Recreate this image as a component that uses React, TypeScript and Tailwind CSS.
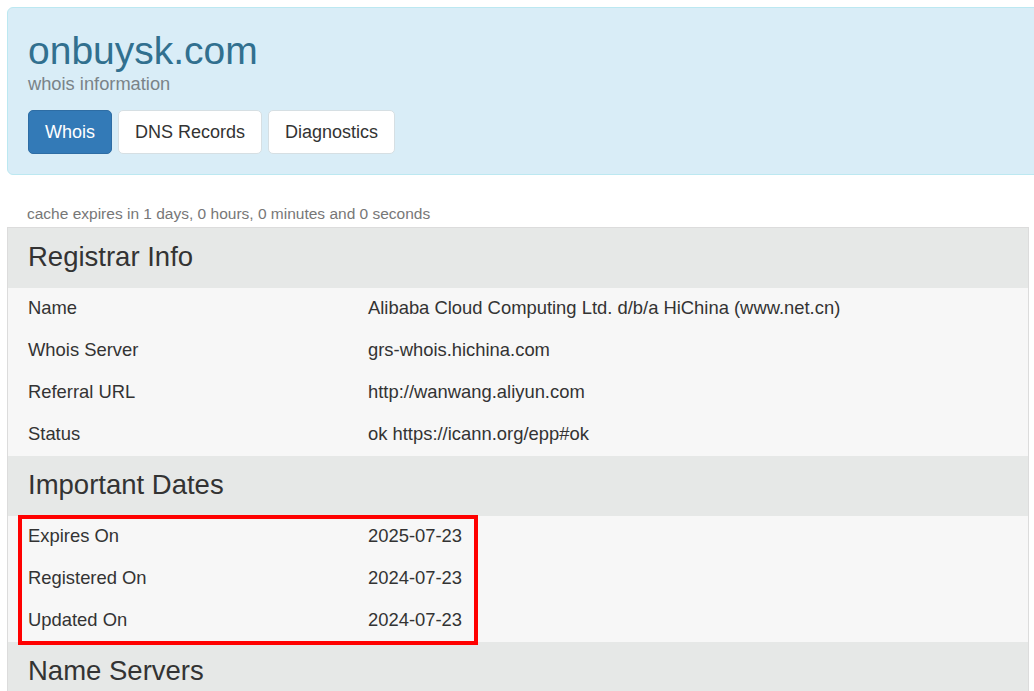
import React from 'react';

const registrar = [
	['Name', 'Alibaba Cloud Computing Ltd. d/b/a HiChina (www.net.cn)'],
	['Whois Server', 'grs-whois.hichina.com'],
	['Referral URL', 'http://wanwang.aliyun.com'],
	['Status', 'ok https://icann.org/epp#ok'],
];

const dates = [
	['Expires On', '2025-07-23'],
	['Registered On', '2024-07-23'],
	['Updated On', '2024-07-23'],
];

function SectionHead({ title }: { title: string }) {
	return (
		<div className="h-[60px] bg-[#e6e8e7] px-5 flex items-center text-[27.5px] leading-none text-[#333] pb-[3px]">
			{title}
		</div>
	);
}

function Rows({ rows }: { rows: string[][] }) {
	return (
		<div className="bg-[#f7f7f7]">
			{rows.map(([k, v]) => (
				<div key={k} className="grid grid-cols-[340px_1fr] h-[42px] items-center text-[18.4px] text-[#333] pb-[2px]">
					<div className="pl-5">{k}</div>
					<div className="pl-5">{v}</div>
				</div>
			))}
		</div>
	);
}

export default function App() {
	return (
		<div
			className="w-[1034px] h-[691px] overflow-hidden bg-white"
			style={{ fontFamily: '"Liberation Sans", Arial, sans-serif' }}
		>
			{/* header */}
			<div className="ml-[7px] mt-[7px] w-[1060px] h-[168px] rounded-md border border-[#bce8f1] bg-[#d9edf7] pl-5 pt-[23px]">
				<h1 className="text-[39px] leading-[40px] text-[#31708f]">onbuysk.com</h1>
				<div className="mt-[2px] text-[18.3px] leading-[21px] text-[#7a8388]">whois information</div>
				<div className="mt-[16px] flex gap-[6px]">
					<button className="h-[44px] px-4 rounded-[5px] border border-[#2e6da4] bg-[#337ab7] text-[18px] text-white">
						Whois
					</button>
					<button className="h-[44px] px-4 rounded-[5px] border border-[#d6dfe3] bg-white text-[18px] text-[#333]">
						DNS Records
					</button>
					<button className="h-[44px] px-4 rounded-[5px] border border-[#d6dfe3] bg-white text-[18px] text-[#333]">
						Diagnostics
					</button>
				</div>
			</div>

			<div className="mt-[30px] pl-[27px] text-[15.5px] leading-[18px] text-[#777]">
				cache expires in 1 days, 0 hours, 0 minutes and 0 seconds
			</div>

			{/* whois table */}
			<div className="ml-[7px] mt-[4px] w-[1022px] border border-[#dcdcdc]">
				<SectionHead title="Registrar Info" />
				<Rows rows={registrar} />
				<SectionHead title="Important Dates" />
				<div className="relative">
					<Rows rows={dates} />
					<div className="absolute left-[10px] top-[-1px] w-[460px] h-[130px] border-[4px] border-[#f00]" />
				</div>
				<SectionHead title="Name Servers" />
			</div>
		</div>
	);
}
